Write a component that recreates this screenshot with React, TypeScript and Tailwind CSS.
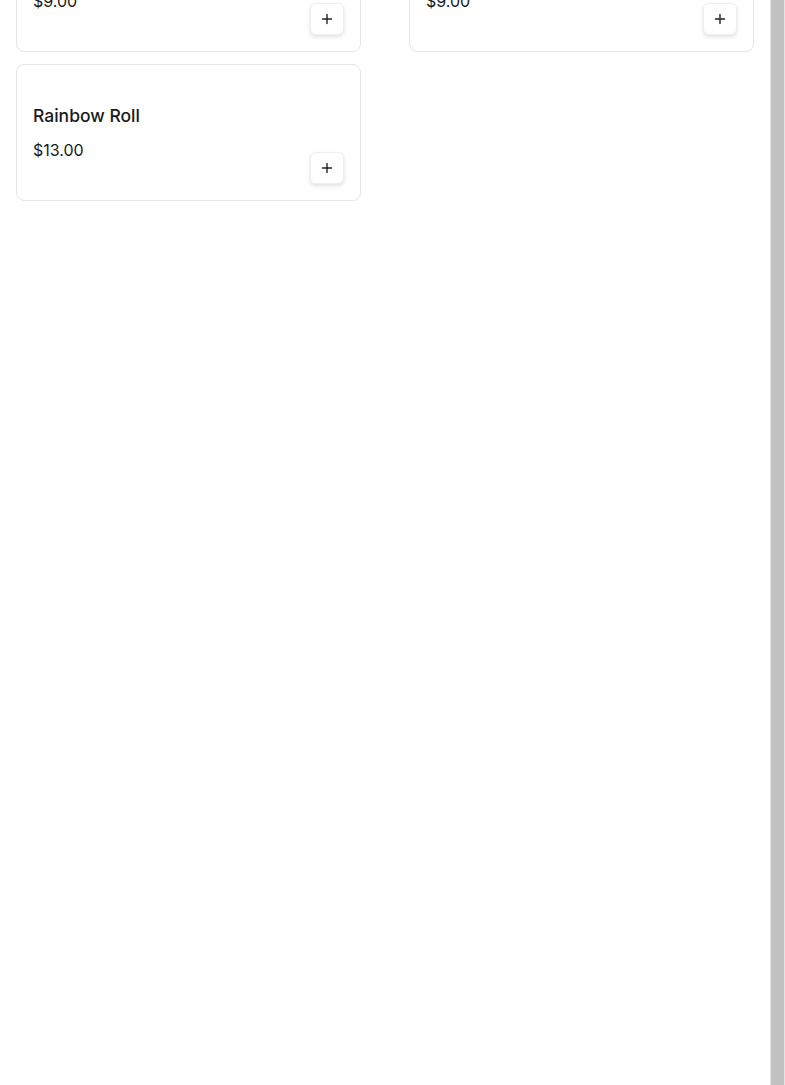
import React from 'react';

type Item = { name: string; price: string };

// Itens do cardápio visíveis na área rolada
const items: Item[] = [
  { name: 'California Roll', price: '$9.00' },
  { name: 'Spicy Tuna Roll', price: '$9.00' },
  { name: 'Rainbow Roll', price: '$13.00' },
];

const PlusIcon = () => (
  <svg width="12" height="12" viewBox="0 0 12 12" fill="none" stroke="#222" strokeWidth="1.4" strokeLinecap="round">
    <path d="M6 1.5v9M1.5 6h9" />
  </svg>
);

const MenuCard: React.FC<{ item: Item }> = ({ item }) => (
  <div className="flex items-end justify-between rounded-lg border border-[#e6e6e6] bg-white px-4 pt-[37px] pb-4">
    <div className="flex flex-col pb-[22px]">
      <h3 className="text-[17.5px] leading-[28px] font-medium text-[#1a1a1a]">{item.name}</h3>
      <p className="mt-2 text-[16px] leading-[24px] text-[#1a1a1a]">{item.price}</p>
    </div>
    <button className="flex h-[32px] w-[34px] items-center justify-center rounded-md border border-[#efefef] bg-white shadow-[0_2px_4px_rgba(0,0,0,0.12)]">
      <PlusIcon />
    </button>
  </div>
);

export default function App() {
  return (
    <div className="flex h-[1085px] w-[785px] overflow-hidden bg-white font-['Inter',sans-serif]">
      <main className="w-[770px] px-4">
        <div className="mt-[-85px] grid grid-cols-2 gap-x-12 gap-y-3">
          {items.map((item) => (
            <MenuCard key={item.name} item={item} />
          ))}
        </div>
      </main>
      {/* barra de rolagem */}
      <div className="h-full w-[15px] bg-[#e4e4e4] px-px">
        <div className="h-full bg-[#c1c1c1]" />
      </div>
    </div>
  );
}
